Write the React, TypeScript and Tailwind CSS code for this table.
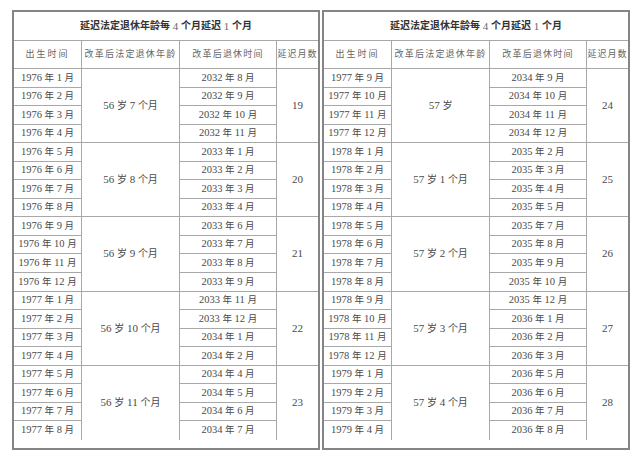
import React from "react";

type Group = { births: string[]; age: string; retire: string[]; delay: number };

const left: Group[] = [
  { births: ["1976 年 1 月", "1976 年 2 月", "1976 年 3 月", "1976 年 4 月"], age: "56 岁 7 个月", retire: ["2032 年 8 月", "2032 年 9 月", "2032 年 10 月", "2032 年 11 月"], delay: 19 },
  { births: ["1976 年 5 月", "1976 年 6 月", "1976 年 7 月", "1976 年 8 月"], age: "56 岁 8 个月", retire: ["2033 年 1 月", "2033 年 2 月", "2033 年 3 月", "2033 年 4 月"], delay: 20 },
  { births: ["1976 年 9 月", "1976 年 10 月", "1976 年 11 月", "1976 年 12 月"], age: "56 岁 9 个月", retire: ["2033 年 6 月", "2033 年 7 月", "2033 年 8 月", "2033 年 9 月"], delay: 21 },
  { births: ["1977 年 1 月", "1977 年 2 月", "1977 年 3 月", "1977 年 4 月"], age: "56 岁 10 个月", retire: ["2033 年 11 月", "2033 年 12 月", "2034 年 1 月", "2034 年 2 月"], delay: 22 },
  { births: ["1977 年 5 月", "1977 年 6 月", "1977 年 7 月", "1977 年 8 月"], age: "56 岁 11 个月", retire: ["2034 年 4 月", "2034 年 5 月", "2034 年 6 月", "2034 年 7 月"], delay: 23 },
];

const right: Group[] = [
  { births: ["1977 年 9 月", "1977 年 10 月", "1977 年 11 月", "1977 年 12 月"], age: "57 岁", retire: ["2034 年 9 月", "2034 年 10 月", "2034 年 11 月", "2034 年 12 月"], delay: 24 },
  { births: ["1978 年 1 月", "1978 年 2 月", "1978 年 3 月", "1978 年 4 月"], age: "57 岁 1 个月", retire: ["2035 年 2 月", "2035 年 3 月", "2035 年 4 月", "2035 年 5 月"], delay: 25 },
  { births: ["1978 年 5 月", "1978 年 6 月", "1978 年 7 月", "1978 年 8 月"], age: "57 岁 2 个月", retire: ["2035 年 7 月", "2035 年 8 月", "2035 年 9 月", "2035 年 10 月"], delay: 26 },
  { births: ["1978 年 9 月", "1978 年 10 月", "1978 年 11 月", "1978 年 12 月"], age: "57 岁 3 个月", retire: ["2035 年 12 月", "2036 年 1 月", "2036 年 2 月", "2036 年 3 月"], delay: 27 },
  { births: ["1979 年 1 月", "1979 年 2 月", "1979 年 3 月", "1979 年 4 月"], age: "57 岁 4 个月", retire: ["2036 年 5 月", "2036 年 6 月", "2036 年 7 月", "2036 年 8 月"], delay: 28 },
];

function Mixed({ text, cjk, num }: { text: string; cjk: string; num: string }) {
  const parts = text.split(/([\u4e00-\u9fff]+)/).filter((p) => p.length > 0);
  return (
    <span className={num}>
      {parts.map((p, i) =>
        /[\u4e00-\u9fff]/.test(p) ? (
          <span key={i} className={cjk}>
            {p}
          </span>
        ) : (
          <span key={i}>{p}</span>
        )
      )}
    </span>
  );
}

const cell = "flex items-center justify-center border-[#a8a8a8] whitespace-nowrap leading-none";

function Table({ groups }: { groups: Group[] }) {
  const cells: React.ReactNode[] = [];
  groups.forEach((g, gi) => {
    const lastGroup = gi === groups.length - 1;
    for (let i = 0; i < 4; i++) {
      const lastRow = lastGroup && i === 3;
      cells.push(
        <div key={`b${gi}${i}`} className={`${cell} col-start-1 border-r ${lastRow ? "" : "border-b"}`}>
          <Mixed text={g.births[i]} num="text-[10.5px]" cjk="text-[9.5px]" />
        </div>
      );
      if (i === 0) {
        cells.push(
          <div key={`a${gi}`} className={`${cell} col-start-2 row-span-4 border-r ${lastGroup ? "" : "border-b"}`}>
            <Mixed text={g.age} num="text-[11px]" cjk="text-[10px]" />
          </div>
        );
      }
      cells.push(
        <div key={`r${gi}${i}`} className={`${cell} col-start-3 border-r ${lastRow ? "" : "border-b"}`}>
          <Mixed text={g.retire[i]} num="text-[10.5px]" cjk="text-[9.5px]" />
        </div>
      );
      if (i === 0) {
        cells.push(
          <div key={`d${gi}`} className={`${cell} col-start-4 row-span-4 text-[11px] ${lastGroup ? "" : "border-b"}`}>
            {g.delay}
          </div>
        );
      }
    }
  });
  return (
    <div className="w-[308px] border-2 border-[#858585] grid grid-cols-[68px_98px_97px_41px] grid-rows-[29px_28px_repeat(20,18.55px)] text-[#4a4a4a]">
      <div className="col-span-4 flex items-center justify-center border-b border-[#a8a8a8] text-[#333] leading-none whitespace-nowrap">
        <span className="font-bold text-[10px]">延迟法定退休年龄每</span>
        <span className="text-[11px] text-[#666]">&nbsp;4&nbsp;</span>
        <span className="font-bold text-[10px]">个月延迟</span>
        <span className="text-[11px] text-[#666]">&nbsp;1&nbsp;</span>
        <span className="font-bold text-[10px]">个月</span>
      </div>
      <div className={`${cell} border-r border-b text-[9px] tracking-[2px] text-[#666]`}>出生时间</div>
      <div className={`${cell} border-r border-b text-[9px] tracking-[1.2px] text-[#666]`}>改革后法定退休年龄</div>
      <div className={`${cell} border-r border-b text-[9px] tracking-[1.2px] text-[#666]`}>改革后退休时间</div>
      <div className={`${cell} border-b text-[9px] tracking-[1px] text-[#666]`}>延迟月数</div>
      {cells}
    </div>
  );
}

export default function App() {
  return (
    <div
      className="w-[640px] h-[450px] bg-white pt-[10px] pl-[12px] flex gap-[2px]"
      style={{ fontFamily: '"Liberation Serif", "Noto Sans CJK SC", serif' }}
    >
      <Table groups={left} />
      <Table groups={right} />
    </div>
  );
}
